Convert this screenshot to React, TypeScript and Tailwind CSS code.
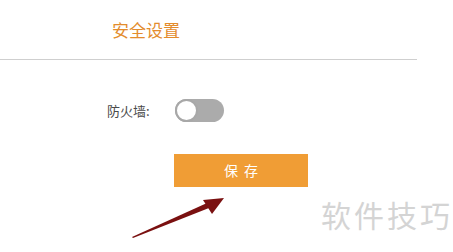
import React from "react";

export default function App() {
  return (
    <div
      className="relative w-[453px] h-[252px] bg-white overflow-hidden"
      style={{ fontFamily: '"Noto Sans CJK SC", "Noto Sans", sans-serif' }}
    >
      <div className="flex flex-col">
        <div className="h-[59px] flex items-center pl-[112px]">
          <span className="text-[17px] leading-none text-[#e38c2d]">安全设置</span>
        </div>
        <div className="w-[417px] h-px bg-[#cfcfcf]" />
        <div className="mt-[39px] flex items-center pl-[107px]">
          <span className="w-[68px] text-[13px] leading-none text-[#4a4a4a]">防火墙:</span>
          <div className="relative w-[49px] h-[23px] rounded-full bg-[#ababab]">
            <div className="absolute left-0 top-0 w-[23px] h-[23px] rounded-full bg-white border-2 border-[#a8a8a8]" />
          </div>
        </div>
        <div className="mt-[32px] pl-[174px]">
          <div className="w-[134px] h-[33px] bg-[#f09d35] flex items-center justify-center text-white text-[14px] tracking-[6px] pl-[6px]">
            保存
          </div>
        </div>
      </div>

      <svg className="absolute left-0 top-0 pointer-events-none" width="453" height="252">
        <polygon points="132,237 207,203 209,208 133,238" fill="#7a1010" />
        <polygon points="203,200 224,198 212,214" fill="#7a1010" />
      </svg>

      <div className="absolute left-[321px] top-[199px] text-[30px] leading-none tracking-[3px] text-[#d4d4d4] whitespace-nowrap">
        软件技巧
      </div>
    </div>
  );
}
